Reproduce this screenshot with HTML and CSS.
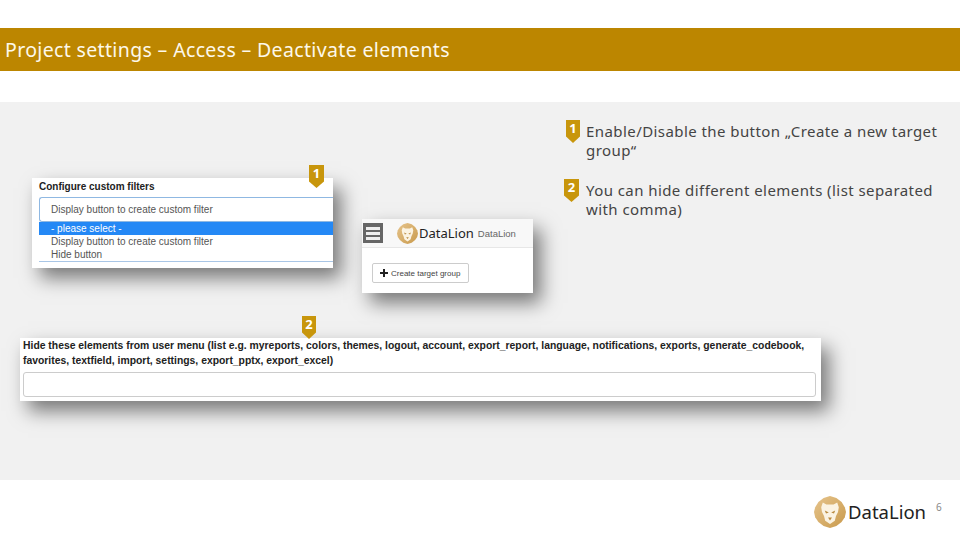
FILE: index.html
```html
<!DOCTYPE html>
<html lang="en">
<head>
<meta charset="utf-8">
<title>Project settings</title>
<link rel="stylesheet" href="styles.css">
</head>
<body>
<div class="slide">
  <header class="title-bar"><h1 class="title">Project settings – Access – Deactivate elements</h1></header>
  <main class="canvas">
    <section class="card card-filter">
      <div class="label">Configure custom filters</div>
      <div class="select-box">Display button to create custom filter</div>
      <ul class="options">
        <li class="option option-active">- please select -</li>
        <li class="option">Display button to create custom filter</li>
        <li class="option">Hide button</li>
      </ul>
    </section>
    <section class="card card-nav">
      <div class="nav">
        <div class="burger"><span></span><span></span><span></span></div>
        <svg class="lion lion-nav" viewBox="0 0 40 40"><use href="#lion"/></svg>
        <span class="nav-brand">DataLion</span>
        <span class="nav-name">DataLion</span>
      </div>
      <div class="nav-body">
        <div class="btn"><svg class="plus" viewBox="0 0 8 8"><path d="M3 0h2v3h3v2H5v3H3V5H0V3h3z"/></svg>Create target group</div>
      </div>
    </section>
    <section class="card card-hide">
      <div class="label label-wide">Hide these elements from user menu (list e.g. myreports, colors, themes, logout, account, export_report, language, notifications, exports, generate_codebook, favorites, textfield, import, settings, export_pptx, export_excel)</div>
      <div class="text-input"></div>
    </section>
    <div class="pin pin-a">1</div>
    <div class="pin pin-b">2</div>
    <div class="notes">
      <div class="note"><div class="pin pin-one">1</div><p class="note-text">Enable/Disable the button „Create a new target group“</p></div>
      <div class="note"><div class="pin pin-two">2</div><p class="note-text">You can hide different elements (list separated with comma)</p></div>
    </div>
  </main>
  <footer class="footer">
    <svg class="lion lion-foot" viewBox="0 0 40 40">
      <defs>
        <linearGradient id="gold" x1="0" y1="0" x2="1" y2="1">
          <stop offset="0" stop-color="#e6c48c"/>
          <stop offset="1" stop-color="#c99a4c"/>
        </linearGradient>
        <g id="lion">
          <path fill="url(#gold)" d="M20 0l8 2.500 6.500 5 4 6.500 1.500 6-1.500 6.500-4 6-6.500 5-8 2.500-8-2.500-6.500-5-4-6-1.500-6.500 1.500-6 4-6.500 6.500-5z"/>
          <path fill="#fbf3e2" d="M11 8l4.500 2.500h9L29 8l2 6-1 6-2.500 5-1.500 6-6 4-6-4-1.500-6L10 20l-1-6z"/>
          <path fill="#b98a3e" d="M13.500 18l5 2.500-3.500 1.500zM26.500 18l-5 2.500 3.500 1.500zM17.500 27h5L20 30.500z"/>
        </g>
      </defs>
      <use href="#lion"/>
    </svg>
    <span class="foot-brand">DataLion</span>
    <span class="page-no">6</span>
  </footer>
</div>
</body>
</html>
```
FILE: styles.css
```css
* { box-sizing: border-box; }
html, body { margin: 0; padding: 0; background: #fff; }
.slide { width: 960px; height: 540px; overflow: hidden; padding-top: 28px; display: flex; flex-direction: column; font-family: "Noto Sans", sans-serif; }
.title-bar { height: 43px; background: #bc8600; display: flex; align-items: center; padding-left: 5px; flex: none; }
.title { margin: 0; font-size: 19.5px; font-weight: 400; color: #fdf8ea; letter-spacing: 0.35px; white-space: nowrap; }
.canvas { position: relative; margin-top: 31px; height: 378px; background: #f1f1f1; flex: none; }

.card { position: absolute; background: #fff; font-family: "Liberation Sans", sans-serif; box-shadow: 8px 10px 18px rgba(0,0,0,0.5); }
.card-filter { left: 32px; top: 76px; width: 301px; height: 90px; padding: 2px 0 0 7px; overflow: hidden; }
.label { font-size: 10px; font-weight: 700; color: #222; line-height: 13px; }
.select-box { margin-top: 4px; height: 25px; border: 1px solid #8fb8e2; border-right: 0; border-radius: 3px 0 0 3px; font-size: 10px; color: #555; line-height: 23px; padding-left: 11px; }
.options { list-style: none; margin: 0; padding: 0; border-bottom: 1px solid #a9c6e6; height: 40px; }
.option { font-size: 10px; line-height: 13px; color: #555; padding-left: 12px; }
.option-active { background: #2488f5; color: #fff; }

.card-nav { left: 362px; top: 117px; width: 171px; height: 74px; }
.nav { height: 29px; background: #f8f8f8; border-bottom: 1px solid #e7e7e7; display: flex; align-items: center; }
.burger { width: 20px; height: 20px; margin-left: 1px; background: #666; display: flex; flex-direction: column; justify-content: center; gap: 2px; padding: 0 3px; }
.burger span { display: block; height: 3px; background: #eee; }
.lion-nav { width: 21px; height: 21px; margin-left: 14px; }
.nav-brand { font-family: "Noto Sans", sans-serif; font-size: 13px; color: #222; margin-left: 1px; }
.nav-name { font-size: 9.5px; color: #666; margin-left: 4px; }
.nav-body { padding: 15px 0 0 10px; }
.btn { width: 97px; height: 20px; border: 1px solid #ccc; border-radius: 2px; font-size: 8px; color: #444; display: flex; align-items: center; padding-left: 7px; gap: 3px; white-space: nowrap; }
.plus { width: 8px; height: 8px; fill: #222; flex: none; }

.card-hide { left: 20px; top: 236px; width: 801px; height: 63px; padding: 0 5px 0 3px; }
.label-wide { font-size: 10.38px; line-height: 15px; }
.text-input { margin-top: 4px; height: 25px; border: 1px solid #ccc; border-radius: 3px; background: #fff; }

.pin { position: relative; width: 14px; height: 23px; background: #c8960c; color: #fff; font-family: "Noto Sans", sans-serif; font-size: 13px; font-weight: 700; text-align: center; line-height: 17px; clip-path: polygon(0 0, 100% 0, 100% 72%, 50% 100%, 0 72%); flex: none; }
.pin-a { position: absolute; left: 309px; top: 63px; width: 15px; }
.pin-b { position: absolute; left: 302px; top: 214px; }
.pin-two { width: 15px; margin-left: -2px; }

.notes { position: absolute; left: 566px; top: 18px; width: 385px; display: flex; flex-direction: column; gap: 19px; }
.note { display: flex; gap: 6px; }
.pin-two + .note-text { margin-left: 1px; }
.note-text { margin: 0; padding-top: 2px; font-size: 15px; line-height: 19px; color: #444; letter-spacing: 0.43px; width: 360px; }

.footer { flex: 1; display: flex; align-items: flex-start; padding: 16px 0 0 814px; }
.lion-foot { width: 32px; height: 32px; flex: none; }
.foot-brand { font-size: 18.5px; color: #222; margin-left: 2px; line-height: 32px; }
.page-no { font-size: 10px; color: #888; margin-left: 10px; line-height: 22px; }
```
